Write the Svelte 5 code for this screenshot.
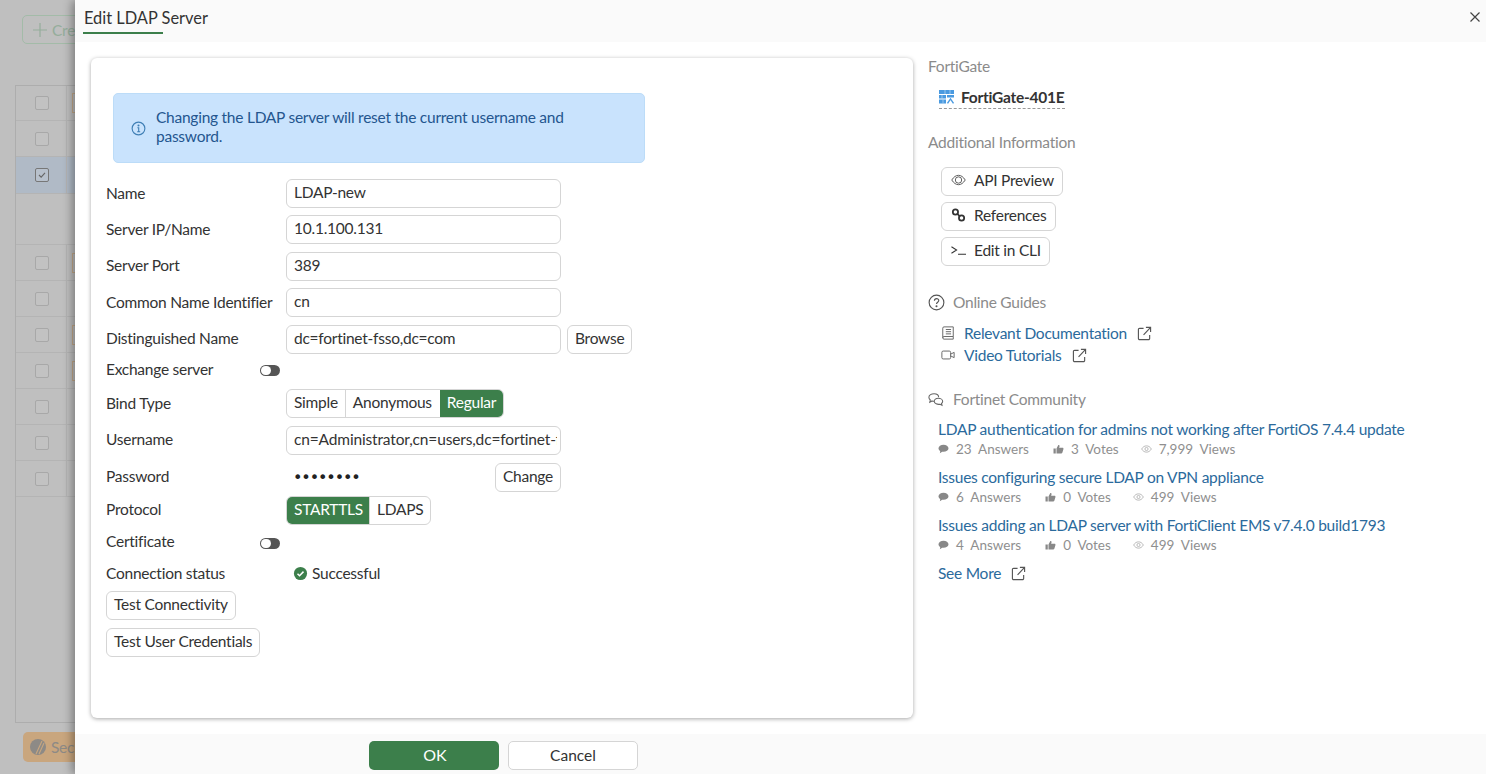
<script>
  const rowsA = [{ mark: true }, { mark: false }, { mark: false, sel: true }, { gap: true }];
  const rowsB = [true, false, true, true, false, false, false];
  const community = [
    { t: 'LDAP authentication for admins not working after FortiOS 7.4.4 update', a: '23', v: '3', w: '7,999' },
    { t: 'Issues configuring secure LDAP on VPN appliance', a: '6', v: '0', w: '499' },
    { t: 'Issues adding an LDAP server with FortiClient EMS v7.4.0 build1793', a: '4', v: '0', w: '499' }
  ];
</script>

{#snippet ext()}
  <svg class="ext" viewBox="0 0 16 16" fill="none" stroke="#555" stroke-width="1.2"><path d="M7 2.5H2.8a1.3 1.3 0 0 0-1.3 1.3v9.4a1.3 1.3 0 0 0 1.3 1.3h9.4a1.3 1.3 0 0 0 1.3-1.3V9.5M7 9.5 14.5 1.5M9.500 1.500h5v5"/></svg>
{/snippet}

<div class="page">
  <div class="behind">
    <div class="create"><svg class="plus" viewBox="0 0 14 14" stroke="#95ad9b" stroke-width="1.200"><path d="M7 0v14M0 7h14"/></svg>Create New</div>
    <div class="table">
      {#each rowsA as r}
        <div class="trow" class:sel={r.sel} class:gap={r.gap}>
          {#if !r.gap}
            <span class="cell"><span class="cb" class:on={r.sel}>{#if r.sel}<svg viewBox="0 0 14 14" fill="none" stroke="#666" stroke-width="1.3"><path d="M3.5 7l2.5 2.5 4.500-5"/></svg>{/if}</span></span>
            {#if r.mark}<span class="tag"></span>{/if}
          {/if}
        </div>
      {/each}
      {#each rowsB as m}
        <div class="trow"><span class="cell"><span class="cb"></span></span>{#if m}<span class="tag"></span>{/if}</div>
      {/each}
    </div>
    <div class="chip">
      <svg class="chipdot" viewBox="0 0 16 16"><circle cx="8" cy="8" r="8" fill="#8d8a86"/><path d="M6 15l6-13M9 15l5-11" stroke="#c9a67e" stroke-width="1.100"/></svg>
      Security
    </div>
  </div>

  <section class="panel">
    <header class="head">
      <h1>Edit LDAP Server</h1>
      <svg class="close" viewBox="0 0 12 12" stroke="#444" stroke-width="1.2"><path d="M1.5 1.5l9 9M10.5 1.5l-9 9"/></svg>
    </header>
    <div class="body">
      <div class="card">
        <div class="alert">
          <svg class="info" viewBox="0 0 16 16" fill="none" stroke="#3f7fb5" stroke-width="1.2"><circle cx="8" cy="8" r="6.8"/><path d="M6.8 7.2H8.2V11.5M6.6 11.5h3.2" /><circle cx="8" cy="4.8" r=".5" fill="#3f7fb5"/></svg>
          <p>Changing the LDAP server will reset the current username and password.</p>
        </div>
        <div class="form">
          <div class="row"><span class="lbl">Name</span><div class="input">LDAP-new</div></div>
          <div class="row"><span class="lbl">Server IP/Name</span><div class="input">10.1.100.131</div></div>
          <div class="row"><span class="lbl">Server Port</span><div class="input">389</div></div>
          <div class="row"><span class="lbl">Common Name Identifier</span><div class="input">cn</div></div>
          <div class="row"><span class="lbl">Distinguished Name</span><div class="input">dc=fortinet-fsso,dc=com</div><button class="btn browse">Browse</button></div>
          <div class="row r6"><span class="lbl short">Exchange server</span><span class="toggle"></span></div>
          <div class="row"><span class="lbl">Bind Type</span><div class="seg"><span>Simple</span><span class="anon">Anonymous</span><span class="active reg">Regular</span></div></div>
          <div class="row r8"><span class="lbl">Username</span><div class="input clip"><span>cn=Administrator,cn=users,dc=fortinet-fsso,dc=com</span></div></div>
          <div class="row r9"><span class="lbl">Password</span><div class="pw"><span class="dots">••••••••</span><button class="btn">Change</button></div></div>
          <div class="row r10"><span class="lbl">Protocol</span><div class="seg"><span class="active">STARTTLS</span><span>LDAPS</span></div></div>
          <div class="row r11"><span class="lbl short">Certificate</span><span class="toggle"></span></div>
          <div class="row r12"><span class="lbl">Connection status</span><span class="status"><svg viewBox="0 0 16 16"><circle cx="8" cy="8" r="7" fill="#3c7f4b"/><path d="M4.8 8.2l2.2 2.2 4.2-4.4" fill="none" stroke="#fff" stroke-width="1.6"/></svg>Successful</span></div>
          <button class="btn wide t1">Test Connectivity</button>
          <button class="btn wide t2">Test User Credentials</button>
        </div>
      </div>

      <aside class="side">
        <h2 class="first">FortiGate</h2>
        <div class="device">
          <svg viewBox="0 0 16 14"><path fill="#4a9ae0" d="M0 0h15v4H0zM0 5h7v3.600H0zM8 5h7v2.400H8zM0 9.600h7v3.800H0z"/><path d="M8.500 13.400l3-4.500 3 4.500" fill="none" stroke="#4a9ae0" stroke-width="1.400"/><path d="M6 0v4M11 0v4M3 5v3.600M4 9.600v3.800" stroke="#cfe4f8" stroke-width=".6"/></svg>
          <span>FortiGate-401E</span>
        </div>
        <h2 class="addl">Additional Information</h2>
        <div class="actions">
          <button class="btn act"><svg viewBox="0 0 16 12" fill="none" stroke="#555" stroke-width="1"><path d="M.8 6C3 2.6 5.300 1 8 1s5 1.600 7.200 5C13 9.400 10.700 11 8 11S3 9.400.8 6z"/><circle cx="8" cy="6" r="3.400"/></svg>API Preview</button>
          <button class="btn act"><svg viewBox="0 0 16 16" fill="none" stroke="#333" stroke-width="2"><circle cx="4.500" cy="4.500" r="3"/><circle cx="11.500" cy="11.500" r="3"/><path d="M6.500 6.500l3 3"/></svg>References</button>
          <button class="btn act"><svg viewBox="0 0 16 12" fill="none" stroke="#333" stroke-width="1.100"><path d="M.5 2.500L6 6 .5 9.500M7.500 10.500H16"/></svg>Edit in CLI</button>
        </div>
        <h2 class="guides"><svg viewBox="0 0 18 18" fill="none" stroke="#555" stroke-width="1.200"><circle cx="9" cy="9" r="7.800"/><path d="M6.800 7.200c0-3 4.600-3 4.600-.2 0 1.700-2.400 1.700-2.400 3.600"/><circle cx="9" cy="13" r=".5" fill="#555"/></svg>Online Guides</h2>
        <div class="links">
          <div class="lnk"><svg class="li" viewBox="0 0 14 16" fill="none" stroke="#666" stroke-width="1.100"><path d="M2.500 1h10.500v11H2.500A1.500 1.500 0 0 0 1 13.500v-11A1.500 1.500 0 0 1 2.500 1zM1 13.500A1.500 1.500 0 0 0 2.500 15H13v-3M4.500 4h6M4.500 6.500h6M4.500 9h6"/></svg><a href="#top">Relevant Documentation</a>{@render ext()}</div>
          <div class="lnk"><svg class="li" viewBox="0 0 16 12" fill="none" stroke="#666" stroke-width="1.100"><rect x="1" y="1.500" width="10" height="9" rx="1.500"/><path d="M11 5l4-2v6l-4-2"/></svg><a href="#top">Video Tutorials</a>{@render ext()}</div>
        </div>
        <h2 class="comm"><svg viewBox="0 0 18 16" fill="none" stroke="#666" stroke-width="1.200"><path d="M12 5.500c0-2.500-2.300-4-5.200-4S1 3 1 5.500c0 1.300.6 2.300 1.600 3.100L2 11l2.600-1.400c.7.200 1.400.3 2.200.3"/><path d="M7 10c0-2 1.900-3.400 4.500-3.400S16.500 8 16.500 10c0 1-.5 1.900-1.300 2.500l.5 2-2.200-1.200c-2.900.6-6.500-.6-6.500-3.300z"/></svg>Fortinet Community</h2>
        <div class="posts">
          {#each community as p}
            <div class="post">
              <a href="#top">{p.t}</a>
              <div class="meta">
                <span class="m1"><svg viewBox="0 0 12 11"><path fill="#888" d="M6 .8c3 0 5.500 1.700 5.500 3.900S9 8.500 6 8.500c-.5 0-1 0-1.400-.1L2 10.200l.4-2.500C1.100 7 .5 5.900.5 4.700.5 2.500 3 .8 6 .8z"/></svg>{p.a}&nbsp; Answers</span>
                <span class="m2"><svg viewBox="0 0 12 11"><path fill="#888" d="M.5 5h2.500v5.500H.5zM3.800 5l2-4c1-.2 1.600.6 1.300 1.700L6.700 4.200h3.700c.9 0 1.300.8 1 1.500l-1.200 4c-.2.600-.6.800-1.200.8H3.800z"/></svg>{p.v}&nbsp; Votes</span>
                <span class="m3"><svg viewBox="0 0 14 10" fill="none" stroke="#aaa" stroke-width="1"><path d="M.8 5C2.500 2.200 4.500 1 7 1s4.500 1.200 6.200 4C11.500 7.800 9.500 9 7 9S2.500 7.800.8 5z"/><circle cx="7" cy="5" r="2"/></svg>{p.w}&nbsp; Views</span>
              </div>
            </div>
          {/each}
        </div>
        <div class="lnk more"><a href="#top">See More</a>{@render ext()}</div>
      </aside>
    </div>
    <footer class="foot">
      <button class="ok">OK</button>
      <button class="cancel">Cancel</button>
    </footer>
  </section>
</div>

<style>
  :global(body) { margin: 0; font-family: Lato, "Noto Sans", sans-serif; }
  * { box-sizing: border-box; }
  .page { position: relative; width: 1486px; height: 774px; overflow: hidden; background: #bfbfbf; font-size: 15.500px; letter-spacing: -.25px; color: #333; }
  .behind { width: 75px; height: 774px; overflow: hidden; padding: 15px 0 0 15px; }
  .create { width: 120px; height: 29px; margin-left: 7px; border: 1px solid #a3bba8; border-radius: 5px; color: #95ad9b; padding-left: 10px; white-space: nowrap; display: flex; align-items: center; gap: 5px; }
  .plus { width: 14px; height: 14px; flex: none; }
  .table { margin-top: 41px; width: 100px; height: 638px; border: 1px solid #adadad; }
  .trow { height: 36px; display: flex; align-items: center; gap: 5px; border-bottom: 1px solid #b4b4b4; }
  .trow:first-child { height: 35px; }
  .trow.sel { background: #b0bac6; height: 37px; }
  .trow.gap { height: 51px; }
  .cell { width: 51px; height: 100%; display: flex; align-items: center; padding-left: 19px; border-right: 1px solid #b4b4b4; flex: none; }
  .cb { width: 14px; height: 14px; border: 1.500px solid #a8a8a8; border-radius: 2px; background: #c2c2c2; display: block; flex: none; }
  .cb.on { border-color: #777; background: #b8c1cc; }
  .cb svg { display: block; }
  .tag { width: 10px; height: 20px; border: 1px solid #c4ab8c; flex: none; }
  .chip { margin: 9px 0 0 8px; width: 100px; height: 30px; background: #c9a67e; border-radius: 5px; color: #8d8a86; display: flex; align-items: center; gap: 5px; padding-left: 7px; white-space: nowrap; }
  .chipdot { width: 16px; height: 16px; flex: none; }

  .panel { position: absolute; left: 75px; top: 0; width: 1411px; height: 774px; background: #fff; box-shadow: -3px 0 10px rgba(0,0,0,.35); display: flex; flex-direction: column; border-radius: 4px 0 0 0; }
  .head { height: 42px; background: #fafafa; padding: 0 0 0 9px; position: relative; flex: none; }
  h1 { margin: 0; width: 79px; font-size: 16.400px; letter-spacing: 0; font-weight: 400; color: #333; line-height: 20px; padding-top: 8px; height: 34px; white-space: nowrap; position: relative; }
  h1::after { content: ""; position: absolute; left: -1px; bottom: 0; width: 80px; height: 2px; background: #3c7f4b; }
  .close { position: absolute; right: 5px; top: 11px; width: 12px; height: 12px; }
  .body { flex: 1; display: flex; min-height: 0; padding: 16px 0 16px 16px; }
  .card { width: 822px; height: 660px; background: #fff; border-radius: 6px; box-shadow: 0 1px 4px rgba(0,0,0,.35); padding: 35px 0 0 15px; flex: none; }
  .alert { margin-left: 7px; width: 532px; height: 70px; background: #c9e3fd; border: 1px solid #bcdcf8; border-radius: 5px; display: flex; align-items: center; padding: 0 17px 3px; gap: 10px; color: #24568f; }
  .info { width: 15px; height: 15px; flex: none; margin-top: 3px; }
  .alert p { margin: 0; line-height: 19px; }
  .form { display: block; padding-top: 16px; }
  .row { display: flex; align-items: center; min-height: 29px; margin-bottom: 7.450px; }
  .lbl { width: 180px; flex: none; white-space: nowrap; color: #333; margin-top: -2px; }
  .lbl.short { width: 154px; }
  .input { width: 275px; height: 29px; border: 1px solid #d5d5d5; border-radius: 6px; padding: 0 7px; line-height: 24px; color: #333; white-space: nowrap; overflow: hidden; background: #fff; }
  .input.clip { padding-right: 3px; letter-spacing: -.15px; }
  .clip span { display: block; overflow: hidden; }
  .btn { height: 29px; border: 1px solid #d5d5d5; border-radius: 6px; background: #fff; font: inherit; letter-spacing: inherit; color: #333; padding: 0 7px 2px; }
  .browse { margin-left: 6px; }
  .toggle { display: block; width: 20px; height: 11px; border-radius: 6px; background: #555; position: relative; margin-top: 2px; }
  .toggle::after { content: ""; position: absolute; left: 1px; top: 1px; width: 10px; height: 9px; border-radius: 5px; background: #fff; }
  .r6 { min-height: 17px; margin-top: 1px; margin-bottom: 11px; }
  .r8 { margin-bottom: 8px; }
  .r9 { margin-bottom: 4px; }
  .r10 { margin-bottom: 0; }
  .r11 { min-height: 17px; margin-bottom: 12px; margin-top: 9px; }
  .r12 { min-height: 22px; margin-bottom: 6px; }
  .seg { display: flex; height: 29px; border: 1px solid #d5d5d5; border-radius: 6px; overflow: hidden; background: #fff; }
  .seg span { padding: 0 7px; line-height: 24px; border-left: 1px solid #d5d5d5; }
  .seg span:first-child { border-left: 0; }
  .seg .anon { padding-right: 8px; }
  .seg .active { background: #3c7f4b; color: #fff; border-left: 0; margin: -1px -1px -1px 0; line-height: 26px; }
  .seg .reg { padding-right: 8px; }
  .seg .active:first-child { margin-left: -1px; padding-left: 8px; }
  .pw { width: 275px; display: flex; justify-content: space-between; align-items: center; padding-left: 7px; }
  .dots { letter-spacing: -1.100px; font-size: 16px; font-family: "DejaVu Sans", sans-serif; color: #222; }
  .status { display: flex; align-items: center; gap: 4px; margin-left: 7px; margin-top: -1px; }
  .status svg { width: 15px; height: 15px; margin-top: 1px; }
  .wide { display: block; }
  .t1 { margin-bottom: 8px; }

  .side { flex: 1; padding: 0 0 0 15px; }
  h2 { margin: 0; font-size: 15.500px; font-weight: 400; color: #8b8b8b; line-height: 20px; display: flex; align-items: center; }
  .first { margin-top: -2px; }
  .device { display: inline-flex; align-items: center; gap: 6px; margin: 8px 0 0 11px; height: 25px; padding-top: 1px; border-bottom: 1px dashed #999; font-weight: 700; color: #333; padding-right: 1px; }
  .device svg { width: 16px; height: 14px; }
  .addl { margin-top: 23px; }
  .actions { display: flex; flex-direction: column; align-items: flex-start; gap: 6px; margin: 15px 0 0 13px; }
  .act { display: flex; align-items: center; gap: 8px; padding: 0 8px 3px 9px; height: 29px; }
  .act svg { width: 15px; height: 14px; }
  .guides { margin-top: 26px; gap: 8px; }
  .guides svg { width: 17px; height: 17px; }
  .links { margin: 10px 0 0 13px; }
  .lnk { display: flex; align-items: center; height: 22px; }
  .lnk a, .post a { color: #2b6a9c; text-decoration: none; }
  .li { width: 14px; height: 14px; margin-right: 9px; }
  .ext { width: 15px; height: 15px; margin-left: 10px; }
  .comm { margin-top: 23px; gap: 9px; }
  .comm svg { width: 16px; height: 15px; }
  .posts { margin: 10px 0 0 10px; }
  .post { height: 48px; }
  .post a { display: block; line-height: 20px; white-space: nowrap; }
  .meta { display: flex; font-size: 13.500px; letter-spacing: 0; color: #8f8f8f; line-height: 18px; margin-top: 1px; }
  .meta span { display: flex; align-items: center; white-space: nowrap; }
  .meta svg { width: 11px; height: 10px; margin-right: 7px; }
  .m1 { margin-right: 24px; }
  .m2 { margin-right: 22px; }
  .more { margin-left: 10px; margin-top: -1px; }

  .foot { height: 40px; background: #fafafa; display: flex; gap: 9px; padding: 7px 0 0 294px; flex: none; }
  .ok, .cancel { width: 130px; height: 29px; border-radius: 5px; font: inherit; letter-spacing: 0; padding-bottom: 2px; }
  .ok { background: #3c7f4b; color: #fff; border: 0; padding-left: 8px; padding-bottom: 4px; font-size: 16px; }
  .cancel { background: #fff; border: 1px solid #d5d5d5; color: #333; }
</style>
